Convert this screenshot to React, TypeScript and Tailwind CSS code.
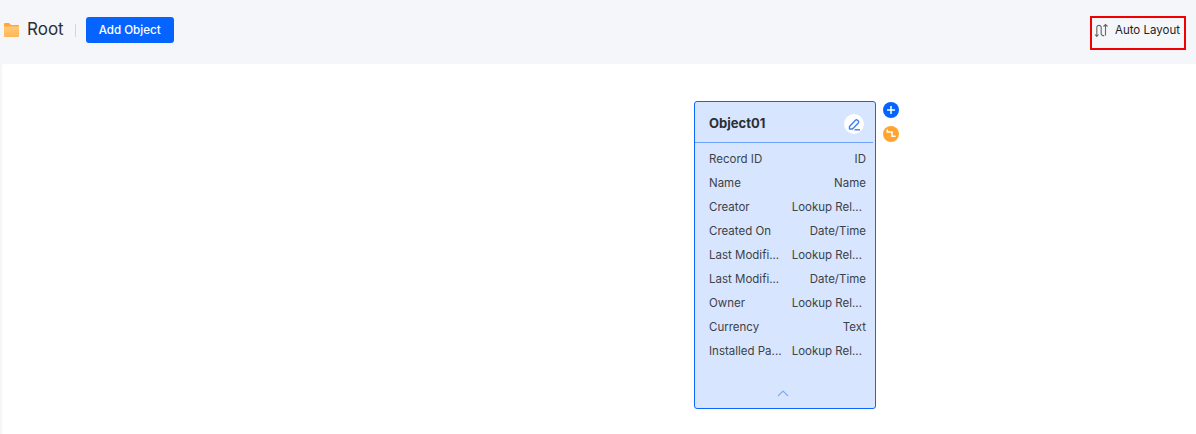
const fields = [
  ["Record ID", "ID"],
  ["Name", "Name"],
  ["Creator", "Lookup Rel..."],
  ["Created On", "Date/Time"],
  ["Last Modifi...", "Lookup Rel..."],
  ["Last Modifi...", "Date/Time"],
  ["Owner", "Lookup Rel..."],
  ["Currency", "Text"],
  ["Installed Pa...", "Lookup Rel..."],
];

function FolderIcon() {
  return (
    <svg width="15" height="14" viewBox="0 0 15 14">
      <defs>
        <linearGradient id="folder" x1="0" y1="0" x2="0" y2="1">
          <stop offset="0" stopColor="#ffca7a" />
          <stop offset="1" stopColor="#ffb650" />
        </linearGradient>
      </defs>
      <path d="M0 1a1 1 0 0 1 1-1h4l2 2h7a1 1 0 0 1 1 1v1H0z" fill="#ffa83a" />
      <rect x="0" y="3.500" width="15" height="10.500" rx="1" fill="url(#folder)" />
    </svg>
  );
}

function AutoLayoutIcon() {
  return (
    <svg width="15" height="15" viewBox="0 0 15 15" fill="none" stroke="#666" strokeWidth="1.100">
      <path d="M1 11.500l1.800 2 1.700-2M2.800 13V4a2.300 2.300 0 0 1 4.400 0v7a2.300 2.300 0 0 0 3 1.500" />
      <path d="M11.500 12.500V1.500M9.500 3.500l2-2 2 2" />
    </svg>
  );
}

function EditIcon() {
  return (
    <svg width="13" height="13" viewBox="0 0 13 13" fill="none" stroke="#3f7ff0" strokeWidth="1.400" strokeLinejoin="round">
      <path d="M1.500 8.500l6-6.300a1.400 1.400 0 0 1 2 0l.8.800a1.400 1.400 0 0 1 0 2L4.500 11H1.500z" />
      <path d="M6.500 11.800h5.500" />
    </svg>
  );
}

function ObjectCard() {
  return (
    <div className="absolute left-[694px] top-[101px] flex h-[308px] w-[182px] flex-col rounded-[3px] border border-[#0e66ff] bg-[#d7e6fe]">
      <div className="mr-[2px] flex h-[41px] shrink-0 items-center justify-between border-b border-[#6fa3fb] pl-[14px] pr-[9px] pt-1">
        <span className="text-[13px] font-bold text-[#2b2f36]">Object01</span>
        <span className="flex h-5 w-5 items-center justify-center rounded-full bg-white">
          <EditIcon />
        </span>
      </div>
      <div className="flex flex-col pt-[5px]">
        {fields.map(([name, type], i) => (
          <div key={i} className="flex h-6 items-center justify-between pl-[14px] pr-[9px] text-[11.5px] text-[#3d4149]">
            <span>{name}</span>
            <span className={type === "Lookup Rel..." ? "mr-1" : ""}>{type}</span>
          </div>
        ))}
      </div>
      <div className="mt-auto flex justify-center pb-[11px] pr-1">
        <svg width="12" height="7" viewBox="0 0 12 7" fill="none" stroke="#7dabfa" strokeWidth="1.100">
          <path d="M1 6l5-5 5 5" />
        </svg>
      </div>
    </div>
  );
}

export default function App() {
  return (
    <div className="relative flex h-[434px] w-[1196px] flex-col bg-[#f5f6f9] font-['Inter',sans-serif]">
      <div className="flex h-[64px] shrink-0 items-center justify-between pb-[4px] pl-[4px] pr-[16px]">
        <div className="flex items-center">
          <FolderIcon />
          <span className="ml-2 text-[17px] text-[#2b2f36]">Root</span>
          <span className="ml-[11px] h-[13px] w-px bg-[#d4d6da]" />
          <button className="ml-[10px] h-[26px] w-[88px] rounded-[3px] bg-[#0564ff] pt-[2px] text-[11.6px] font-medium text-white">
            Add Object
          </button>
        </div>
        <div className="flex items-center gap-[6px] text-[11.5px] text-[#1f2329]">
          <AutoLayoutIcon />
          <span className="pt-[2px]">Auto Layout</span>
        </div>
      </div>
      {/* red marker from the screenshot, sits over the toolbar */}
      <div className="absolute left-[1090px] top-[16px] h-[34px] w-[96px] border-2 border-[#f00000]" />
      <div className="relative ml-[2px] flex-1 rounded-tl-[3px] bg-white">
        <div className="absolute left-[-2px] top-[-64px]">
          <ObjectCard />
        </div>
        <div className="absolute left-[881px] top-[38px] flex h-4 w-4 items-center justify-center rounded-full bg-[#0564ff]">
          <svg width="10" height="10" viewBox="0 0 10 10" stroke="#fff" strokeWidth="1.500">
            <path d="M1 5h8M5 1v8" />
          </svg>
        </div>
        <div className="absolute left-[881px] top-[62px] flex h-4 w-4 items-center justify-center rounded-full bg-[#ffa42f]">
          <svg width="12" height="12" viewBox="0 0 12 12" fill="none" stroke="#fff" strokeWidth="1.500">
            <path d="M2.300 1.500V4H7v4.300h3.500" />
          </svg>
        </div>
      </div>
    </div>
  );
}
